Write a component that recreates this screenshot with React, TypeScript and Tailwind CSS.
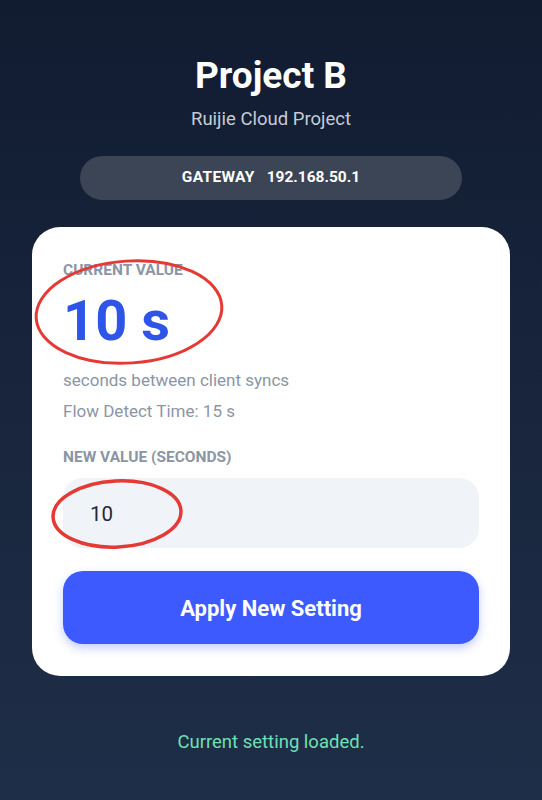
import { useState } from "react";

export default function App() {
  const [value, setValue] = useState("10");

  return (
    <div
      className="relative min-h-[800px] w-full bg-gradient-to-b from-[#111c31] to-[#1f2e48] px-[32px] pb-10 pt-[56px] text-center"
      style={{ fontFamily: "Roboto, 'Noto Sans', sans-serif" }}
    >
      <h1 className="text-[37px] font-bold leading-[40px] text-white">Project B</h1>
      <p className="mt-[11px] text-[18.5px] leading-[24px] text-[#c5ccd6]">
        Ruijie Cloud Project
      </p>

      <div className="mx-auto mt-[25px] flex h-[44px] w-[382px] items-center justify-center gap-3 rounded-full bg-[#3c4556] text-[15.5px] font-bold text-white">
        <span className="tracking-[0.02em]">GATEWAY</span>
        <span>192.168.50.1</span>
      </div>

      {/* Settings card */}
      <div className="mt-[27px] rounded-[28px] bg-white px-[31px] pb-[32px] pt-[33px] text-left">
        <p className="text-[15.5px] font-bold leading-[20px] text-[#8b95a5]">CURRENT VALUE</p>
        <p className="mt-[9px] text-[56px] font-bold leading-[64px] text-[#2f55e8]">10 s</p>
        <p className="mt-[15px] text-[17px] leading-[24px] text-[#8b95a5]">
          seconds between client syncs
        </p>
        <p className="mt-[7px] text-[17px] leading-[24px] text-[#8b95a5]">
          Flow Detect Time: 15 s
        </p>

        <label className="mt-[24px] block text-[15.5px] font-bold leading-[20px] text-[#8b95a5]">
          NEW VALUE (SECONDS)
        </label>
        <input
          type="text"
          value={value}
          onChange={(e) => setValue(e.target.value)}
          className="mt-[11px] h-[70px] w-full rounded-[20px] bg-[#f0f3f7] px-[27px] pt-[2px] text-[20.5px] text-[#1f2937] outline-none"
        />

        <button
          type="button"
          className="mt-[23px] h-[73px] w-full rounded-[20px] bg-[#3d5afe] pt-[2px] text-[22px] font-bold text-white shadow-[0_4px_10px_rgba(61,90,254,0.3)]"
        >
          Apply New Setting
        </button>
      </div>

      <p className="mt-[54px] text-[18.5px] leading-[24px] text-[#6ee0b4]">
        Current setting loaded.
      </p>

      {/* hand-drawn annotation marks */}
      <svg
        className="pointer-events-none absolute left-0 top-0"
        width="542"
        height="800"
        viewBox="0 0 542 800"
        fill="none"
      >
        <ellipse
          cx="129"
          cy="312"
          rx="93"
          ry="51"
          transform="rotate(-4 129 312)"
          stroke="#e53935"
          strokeWidth="3"
        />
        <ellipse
          cx="117"
          cy="514"
          rx="64"
          ry="33"
          transform="rotate(-3 117 514)"
          stroke="#e53935"
          strokeWidth="3.5"
        />
      </svg>
    </div>
  );
}
